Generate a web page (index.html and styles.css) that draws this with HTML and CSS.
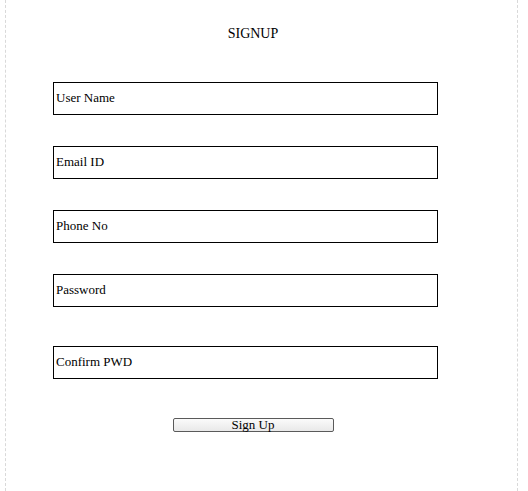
FILE: index.html
```html
<!DOCTYPE html>
<html>
<head>
<meta charset="utf-8">
<link rel="stylesheet" href="styles.css">
</head>
<body>
<div class="page">
  <form class="signup">
    <h1 class="title">SIGNUP</h1>
    <input class="field" type="text" name="username" value="User Name">
    <input class="field" type="text" name="email" value="Email ID">
    <input class="field" type="text" name="phone" value="Phone No">
    <input class="field" type="text" name="password" value="Password">
    <input class="field field-confirm" type="text" name="confirm" value="Confirm PWD">
    <div class="actions">
      <button class="btn" type="button">Sign Up</button>
    </div>
  </form>
</div>
</body>
</html>
```
FILE: styles.css
```css
html, body {
  margin: 0;
  padding: 0;
  background: #fff;
}
body {
  font-family: "Liberation Serif", "Times New Roman", serif;
  color: #000;
}
.page {
  margin-left: 5px;
  width: 511px;
  min-height: 491px;
  border-left: 1px dashed #d9d9d9;
  border-right: 1px dashed #d9d9d9;
}
.signup {
  width: 494px;
  display: flex;
  flex-direction: column;
  align-items: flex-start;
  font-size: 13px;
}
.title {
  align-self: stretch;
  margin: 0;
  padding-top: 26px;
  height: 82px;
  box-sizing: border-box;
  text-align: center;
  font-size: 14px;
  font-weight: normal;
  line-height: 16px;
}
.field {
  box-sizing: border-box;
  width: 385px;
  height: 33px;
  margin: 0 0 31px 47px;
  padding: 0 2px 1px;
  border: 1px solid #000;
  border-radius: 0;
  font: 13px "Liberation Serif", "Times New Roman", serif;
  color: #000;
  background: #fff;
  outline: none;
}
.field-confirm {
  margin-top: 8px;
}
.actions {
  align-self: stretch;
  display: flex;
  justify-content: center;
  margin-top: 8px;
}
.btn {
  box-sizing: border-box;
  width: 161px;
  height: 14px;
  padding: 0 0 1px;
  border: 1px solid #5a5a5a;
  border-radius: 2px;
  background: linear-gradient(#fbfbfb, #e9e9e9);
  font: 13px "Liberation Serif", "Times New Roman", serif;
  line-height: 10px;
  color: #000;
  overflow: visible;
}
```
